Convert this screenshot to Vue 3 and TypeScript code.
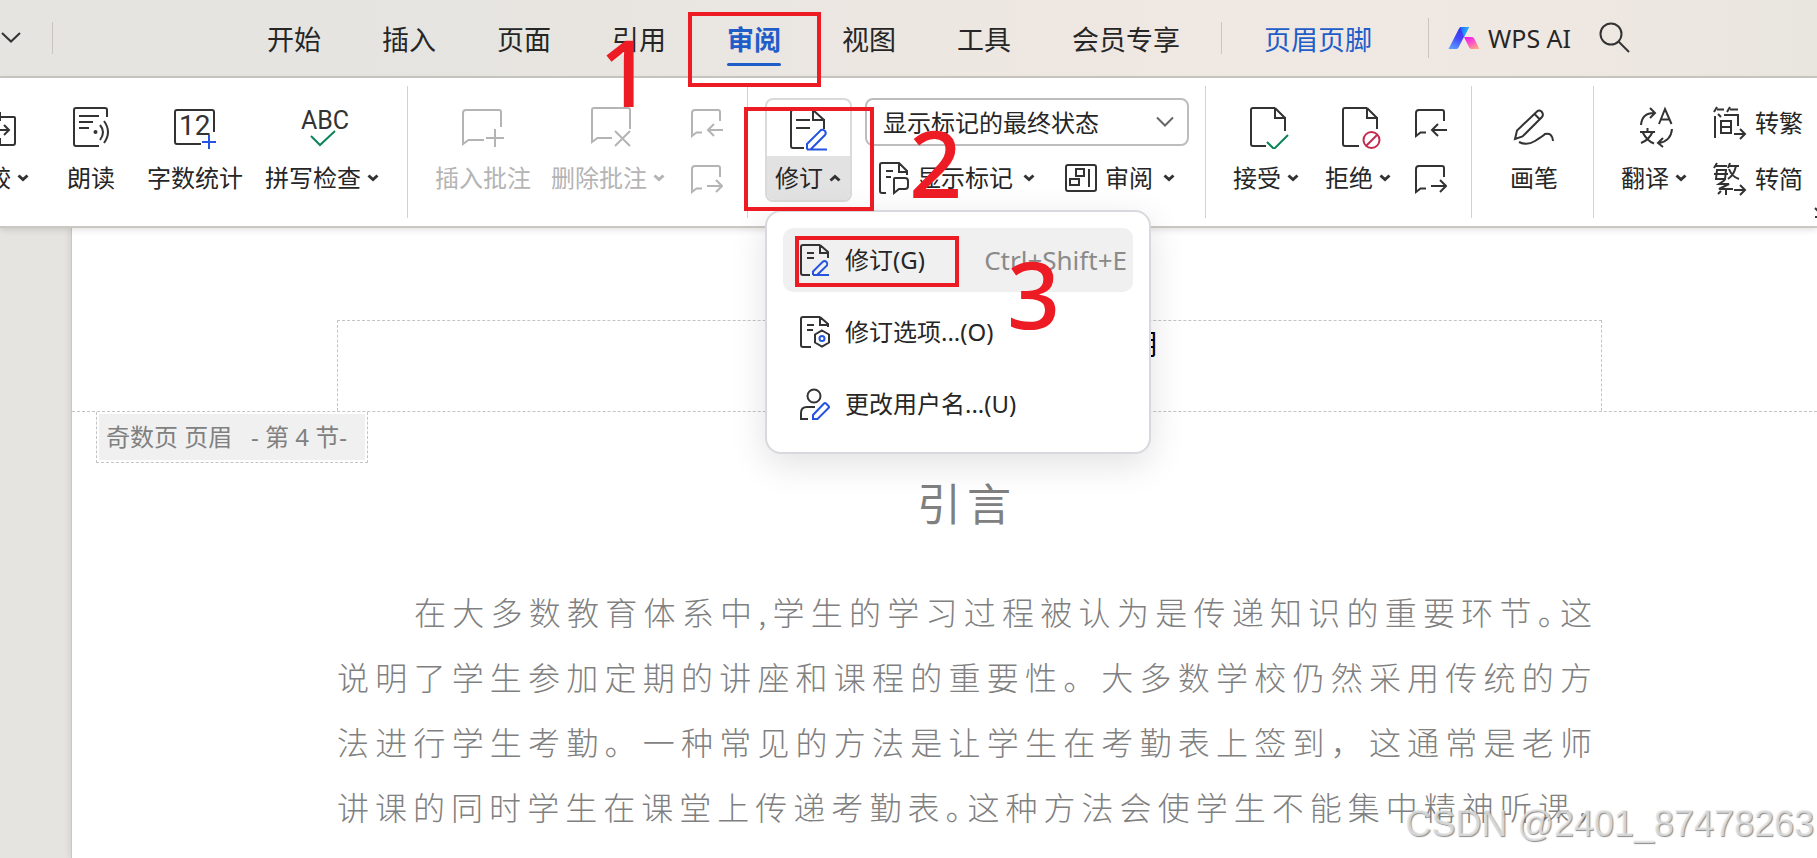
<script setup lang="ts">
import { ref } from 'vue'

interface MenuItem {
  icon: 'revise' | 'options' | 'user'
  label: string
  shortcut?: string
}

const tabs: string[] = ['开始', '插入', '页面', '引用', '审阅', '视图', '工具', '会员专享']
const activeTab = ref<string>('审阅')
const markupView = ref<string>('显示标记的最终状态')

const menuItems: MenuItem[] = [
  { icon: 'revise', label: '修订(G)', shortcut: 'Ctrl+Shift+E' },
  { icon: 'options', label: '修订选项...(O)' },
  { icon: 'user', label: '更改用户名...(U)' },
]
const hoveredItem = ref<number>(0)
</script>

<template>
  <div class="app">
    <header class="tabbar">
      <button class="icon-button" type="button" aria-label="展开">
        <svg width="20" height="12" viewBox="0 0 20 12"><path d="M1 1l9 8.500 9-8.500" /></svg>
      </button>
      <i class="bar-line first"></i>
      <nav class="tabs">
        <button
          v-for="tab in tabs"
          :key="tab"
          type="button"
          class="tab"
          :class="{ active: tab === activeTab }"
          @click="activeTab = tab"
        >{{ tab }}</button>
      </nav>
      <i class="bar-line"></i>
      <button type="button" class="tab context">页眉页脚</button>
      <i class="bar-line tall"></i>
      <button type="button" class="ai">
        <svg width="32" height="22" viewBox="0 0 32 22">
          <defs>
            <linearGradient id="aiBlue" x1="0.700" y1="0" x2="0.200" y2="1">
              <stop offset="0" stop-color="#3a2cf5" /><stop offset="0.500" stop-color="#4448f8" /><stop offset="1" stop-color="#5a9cff" />
            </linearGradient>
            <linearGradient id="aiCyan" x1="0" y1="0" x2="1" y2="0.300">
              <stop offset="0" stop-color="#2458f5" /><stop offset="1" stop-color="#22c4fb" />
            </linearGradient>
            <linearGradient id="aiPink" x1="0.200" y1="0" x2="0.900" y2="1">
              <stop offset="0" stop-color="#f21af0" /><stop offset="0.500" stop-color="#fb5cc0" /><stop offset="1" stop-color="#ffb47c" />
            </linearGradient>
          </defs>
          <path d="M11 1.500Q11.800 0 13 0H21L10.500 20.500Q9.800 22 8 22H0.500z" fill="url(#aiBlue)" />
          <path d="M12 0H21L16 10z" fill="url(#aiCyan)" />
          <path d="M16 10H24Q25.500 10 26.200 11.500L31.500 22H24Q22 22 21.200 20.500z" fill="url(#aiPink)" />
        </svg>
        WPS AI
      </button>
      <button class="icon-button search" type="button" aria-label="搜索">
        <svg width="32" height="32" viewBox="0 0 32 32"><circle cx="12" cy="12" r="10.500" /><path d="M19.500 19.500L30 30" /></svg>
      </button>
    </header>

    <section class="ribbon">
      <div class="group proof">
        <button type="button" class="tool">
          <svg width="66" height="44" viewBox="0 0 66 44">
            <path d="M28 12H43Q44 12 44 13V38Q44 40 42 40H28M22 8H29V16M22 25H38M33 20l5 5-5 5M29 33v8" transform="translate(5 0)" />
          </svg>
          <span class="caption">比较<svg class="caret" width="12" height="8" viewBox="0 0 12 8"><path d="M1.500 1.500L6 5.500l4.500-4" /></svg></span>
        </button>
        <button type="button" class="tool roomy">
          <svg width="38" height="44" viewBox="0 0 38 44">
            <path d="M35 12V5Q35 3 33 3H4Q2 3 2 5V39Q2 41 4 41H27M7 11H27M7 17H21M7 23H17M28 20Q34 27 28 35M32 16Q40 27 32 38" />
            <circle class="ink-fill" cx="23.500" cy="27" r="2" />
          </svg>
          <span class="caption">朗读</span>
        </button>
        <button type="button" class="tool">
          <svg width="44" height="44" viewBox="0 0 44 44">
            <path d="M41 27V7Q41 5 39 5H4Q2 5 2 7V37Q2 39 4 39H28" />
            <text x="6" y="30" class="digits">12</text>
            <path class="blue" d="M36 30V44M29 37H43" />
          </svg>
          <span class="caption">字数统计</span>
        </button>
        <button type="button" class="tool">
          <svg width="60" height="44" viewBox="0 0 60 44">
            <text x="30" y="24" text-anchor="middle" class="abc">ABC</text>
            <path class="green" d="M16 31l9 9L40 26" />
          </svg>
          <span class="caption">拼写检查<svg class="caret" width="12" height="8" viewBox="0 0 12 8"><path d="M1.500 1.500L6 5.500l4.500-4" /></svg></span>
        </button>
      </div>

      <div class="group comments">
        <button type="button" class="tool" disabled>
          <svg width="42" height="44" viewBox="0 0 42 44">
            <path d="M39 22V7Q39 5 37 5H4Q1 5 1 8V39L6.500 35H22M33 24V42M24 33H42" />
          </svg>
          <span class="caption">插入批注</span>
        </button>
        <button type="button" class="tool" disabled>
          <svg width="42" height="44" viewBox="0 0 42 44">
            <path d="M40 24V5Q40 3 38 3H4Q2 3 2 5V37L7.500 33H22M25 26L40 41M40 26L25 41" />
          </svg>
          <span class="caption">删除批注<svg class="caret" width="12" height="8" viewBox="0 0 12 8"><path d="M1.500 1.500L6 5.500l4.500-4" /></svg></span>
        </button>
        <div class="stack">
          <button type="button" class="mini" aria-label="上一条批注" disabled>
            <svg width="32" height="30" viewBox="0 0 32 30"><path d="M29 13V4Q29 2 27 2H4Q1 2 1 5V28L5.500 24.500H11M32 22H17M23 16l-6 6 6 6" /></svg>
          </button>
          <button type="button" class="mini" aria-label="下一条批注" disabled>
            <svg width="32" height="30" viewBox="0 0 32 30"><path d="M29 13V4Q29 2 27 2H4Q1 2 1 5V28L5.500 24.500H11M16 22H31M25 16l6 6-6 6" /></svg>
          </button>
        </div>
      </div>

      <div class="group track">
        <div class="split">
          <button type="button" class="split-top" aria-label="修订">
            <svg width="40" height="44" viewBox="0 0 40 44">
              <path d="M24 3H4Q2 3 2 5V39Q2 41 4 41H15M24 3L35 13V22M24 3V13H36M7 13H21M7 21H21" />
              <path class="blue" d="M18 42.500L18 37 32 23Q34 22 36 24 37.500 26 36 28L22 42M18 42.500H38" />
            </svg>
          </button>
          <button type="button" class="split-bottom" aria-haspopup="menu" aria-expanded="true">
            修订<svg class="caret" width="12" height="8" viewBox="0 0 12 8"><path d="M1.500 6.500L6 2.500l4.500 4" /></svg>
          </button>
          <ul class="menu" role="menu">
            <li v-for="(item, index) in menuItems" :key="item.label" role="none">
              <button
                type="button"
                role="menuitem"
                class="menu-item"
                :class="{ hovered: index === hoveredItem }"
                @mouseenter="hoveredItem = index"
              >
                <svg v-if="item.icon === 'revise'" width="30" height="34" viewBox="0 0 30 34">
                  <path d="M20 2H3Q1 2 1 4V30Q1 32 3 32H10M20 2L28 9V15M20 2V10H29M7 10H14M7 15H14" />
                  <path class="blue" d="M13 32V28.500L23 18.500Q25 17.500 26.500 19 28 20.500 27 22.500L17 32M13 32H29" />
                </svg>
                <svg v-else-if="item.icon === 'options'" width="30" height="34" viewBox="0 0 30 34">
                  <path d="M20 2H3Q1 2 1 4V30Q1 32 3 32H11M20 2L28 9V12M20 2V10H29M7 10H14M7 15H13M22 15.500L29 19.500V27.500L22 31.500 15 27.500V19.500z" />
                  <circle class="blue" cx="22" cy="23.500" r="2.500" />
                </svg>
                <svg v-else width="30" height="34" viewBox="0 0 30 34">
                  <path d="M8 32H1V26Q1 20 7 20H15" /><circle cx="14" cy="9" r="6.500" />
                  <path class="blue" d="M13 32V28L24 16.500Q25 15.500 26 16.500L28.500 19Q29.500 20 28.500 21L17.500 32z" />
                </svg>
                <span>{{ item.label }}</span>
                <kbd v-if="item.shortcut">{{ item.shortcut }}</kbd>
              </button>
            </li>
          </ul>
        </div>
        <div class="stack views">
          <div class="select-box">
            <select v-model="markupView" aria-label="标记显示方式">
              <option>显示标记的最终状态</option>
            </select>
            <svg width="18" height="12" viewBox="0 0 18 12"><path d="M1 1.500l8 8 8-8" /></svg>
          </div>
          <div class="row">
            <button type="button" class="inline-tool">
              <svg width="30" height="34" viewBox="0 0 30 34">
                <path d="M7 32H3Q1 32 1 30V4Q1 2 3 2H20L28 10V14M20 2V11H28M7 10H14M7 16H12M16 17H26Q29 17 29 20V25Q29 28 26 28H20L15 32V18Q15 17 16 17z" />
              </svg>
              显示标记<svg class="caret" width="12" height="8" viewBox="0 0 12 8"><path d="M1.500 1.500L6 5.500l4.500-4" /></svg>
            </button>
            <button type="button" class="inline-tool">
              <svg width="32" height="34" viewBox="0 0 32 34">
                <path d="M3 4H29Q31 4 31 6V28Q31 30 29 30H3Q1 30 1 28V6Q1 4 3 4zM24 8V26M11 8H19V15H11zM5 18H14V24H5z" />
              </svg>
              审阅<svg class="caret" width="12" height="8" viewBox="0 0 12 8"><path d="M1.500 1.500L6 5.500l4.500-4" /></svg>
            </button>
          </div>
        </div>
      </div>

      <div class="group changes">
        <button type="button" class="tool">
          <svg width="40" height="44" viewBox="0 0 40 44">
            <path d="M26 3H4Q2 3 2 5V39Q2 41 4 41H17M26 3L36 13V26M26 3V13H37" />
            <path class="green" d="M18 37l7 7L39 30" />
          </svg>
          <span class="caption">接受<svg class="caret" width="12" height="8" viewBox="0 0 12 8"><path d="M1.500 1.500L6 5.500l4.500-4" /></svg></span>
        </button>
        <button type="button" class="tool">
          <svg width="40" height="44" viewBox="0 0 40 44">
            <path d="M26 3H4Q2 3 2 5V39Q2 41 4 41H18M26 3L36 13V24M26 3V13H37" />
            <path class="red" d="M36.500 29.500L25 41" /><circle class="red" cx="30.500" cy="35" r="8" />
          </svg>
          <span class="caption">拒绝<svg class="caret" width="12" height="8" viewBox="0 0 12 8"><path d="M1.500 1.500L6 5.500l4.500-4" /></svg></span>
        </button>
        <div class="stack">
          <button type="button" class="mini" aria-label="上一条修订">
            <svg width="32" height="30" viewBox="0 0 32 30"><path d="M29 13V4Q29 2 27 2H4Q1 2 1 5V28L5.500 24.500H11M32 22H17M23 16l-6 6 6 6" /></svg>
          </button>
          <button type="button" class="mini" aria-label="下一条修订">
            <svg width="32" height="30" viewBox="0 0 32 30"><path d="M29 13V4Q29 2 27 2H4Q1 2 1 5V28L5.500 24.500H11M16 22H31M25 16l6 6-6 6" /></svg>
          </button>
        </div>
      </div>

      <div class="group pen">
        <button type="button" class="tool">
          <svg width="42" height="44" viewBox="0 0 42 44">
            <path d="M2 34L4 25.500 24 6.500Q26 4.500 28.500 6.500 31 9.500 29 12L9.500 31.500zM21.500 9L27 14.500M6 37Q14 41 22 36T32 29Q39 27 40 36" />
          </svg>
          <span class="caption">画笔</span>
        </button>
      </div>

      <div class="group language">
        <button type="button" class="tool">
          <svg width="36" height="44" viewBox="0 0 36 44">
            <path d="M2 20Q3 8 15 8M11 3l5 5-5 5M33 24Q32 36 20 38M24 33l-5 5 5 4" />
            <path d="M20 19L26 4l6.500 15M22 14.500H30.500M1 27H16M8.500 23V27M13.500 27Q10 35 2 38M3.500 27Q8 36 15 38.500" />
          </svg>
          <span class="caption">翻译<svg class="caret" width="12" height="8" viewBox="0 0 12 8"><path d="M1.500 1.500L6 5.500l4.500-4" /></svg></span>
        </button>
        <div class="stack">
          <button type="button" class="inline-tool">
            <svg width="34" height="34" viewBox="0 0 34 34">
              <path d="M4 1L1 6M4 3.500H11M17 1L14 6M17 3.500H25M2 10V32M5 8L8 11M11 9H25V20M8 15H18V27H8zM8 21H18M21 28H32M27 23l5 5-5 5" />
            </svg>
            转繁
          </button>
          <button type="button" class="inline-tool">
            <svg width="34" height="34" viewBox="0 0 34 34">
              <path d="M4 1L1 6M3 4H14M4 8H13L12 17H3zM1 12H15M17 1L15 6M16 4H26M23 4Q21 13 15 17M16 7Q19 15 26 17M12 18L6 22H16L6 27H20M13 27V33M8 29L5 32M21 28H32M27 23l5 5-5 5" />
            </svg>
            转简
          </button>
        </div>
      </div>
      <button type="button" class="launcher" aria-label="更多选项">
        <svg width="12" height="12" viewBox="0 0 12 12"><path d="M1 1l4 4M1 10H10V2" /></svg>
      </button>
    </section>

    <main class="workspace">
      <article class="sheet">
        <div class="header-zone">
          <div class="header-box"><span>明</span></div>
        </div>
        <div class="header-tag"><span>奇数页 页眉&nbsp;&nbsp; - 第 4 节-</span></div>
        <h1>引言</h1>
        <div class="text">
          <p class="indent">在大多数教育体系中,学生的学习过程被认为是传递知识的重要环节<span class="half">。</span>这</p>
          <p>说明了学生参加定期的讲座和课程的重要性。大多数学校仍然采用传统的方</p>
          <p>法进行学生考勤。一种常见的方法是让学生在考勤表上签到，这通常是老师</p>
          <p>讲课的同时学生在课堂上传递考勤表<span class="half">。</span>这种方法会使学生不能集中精神听课<span class="half">，</span></p>
        </div>
      </article>
    </main>

    <div class="mark box-one"></div>
    <div class="mark box-two"></div>
    <div class="mark box-three"></div>
    <span class="step step-one">1</span>
    <span class="step step-two">2</span>
    <span class="step step-three">3</span>
    <span class="watermark">CSDN @2401_87478263</span>
  </div>
</template>

<style>
body {
  margin: 0;
}
</style>

<style scoped>
* {
  box-sizing: border-box;
}

.app {
  position: relative;
  display: flex;
  flex-direction: column;
  height: 100vh;
  overflow: hidden;
  background: #e5e4e0;
  color: #262626;
  font-family: "Noto Sans", "Noto Sans CJK SC", sans-serif;
  font-size: 24px;
  line-height: 32px;
}

button {
  margin: 0;
  padding: 0;
  border: 0;
  background: none;
  color: inherit;
  font: inherit;
  white-space: nowrap;
}

svg {
  display: block;
  flex: none;
  fill: none;
  stroke: #333;
  stroke-width: 2;
}

svg text {
  stroke: none;
  fill: #333;
}

.digits {
  font: 28px "Roboto", sans-serif;
}

.abc {
  font: 25px "Roboto", sans-serif;
}

svg .blue {
  stroke: #2454e0;
}

svg .green {
  stroke: #0b8457;
}

svg .red {
  stroke: #c62a50;
}

svg .ink-fill {
  fill: #333;
  stroke: none;
}

svg [fill^="url"] {
  stroke: none;
}

/* Tab bar */
.tabbar {
  display: flex;
  align-items: center;
  flex: none;
  height: 78px;
  padding-left: 1px;
  border-bottom: 2px solid #cbc7c2;
  background: linear-gradient(90deg, #e5e4e0 20%, #f0e8e2 66%, #efe8e2 86%, #e9e6df);
}

.bar-line {
  flex: none;
  width: 1px;
  height: 32px;
  background: #c9c6c2;
}

.bar-line.first {
  margin: 0 214px 0 31px;
}

.bar-line.tall {
  height: 40px;
}

.tabs {
  display: flex;
  gap: 61px;
  margin-right: 41px;
}

.tab {
  position: relative;
  height: 76px;
  padding-top: 4px;
  font-size: 27px;
}

.tab.active {
  color: #1f5dc9;
  font-weight: 700;
}

.tab.active::after {
  content: "";
  position: absolute;
  right: 0;
  bottom: 10px;
  left: 0;
  height: 3px;
  border-radius: 2px;
  background: #1f5dc9;
}

.tab.context {
  margin: 0 56px 0 42px;
  color: #1f5dc9;
}

.ai {
  display: flex;
  align-items: center;
  gap: 8px;
  margin-left: 19px;
  font-size: 25px;
}

.search {
  margin-left: 28px;
}

/* Ribbon */
.ribbon {
  position: relative;
  z-index: 1;
  display: flex;
  flex: none;
  height: 150px;
  padding: 8px 0;
  border-bottom: 2px solid #cbc7c2;
  background: #fff;
  box-shadow: 0 2px 6px rgba(0, 0, 0, 0.12);
}

.group {
  display: flex;
  flex: none;
  gap: 20px;
  padding-top: 19px;
  border-right: 1px solid #d2d2d2;
}

.group:last-of-type {
  border-right: 0;
}

.proof {
  justify-content: flex-end;
  gap: 22px;
  width: 408px;
  padding-right: 22px;
}

.comments {
  padding-right: 24px;
  padding-left: 27px;
}

.track {
  gap: 13px;
  padding-right: 16px;
  padding-left: 17px;
}

.changes {
  padding-right: 24px;
  padding-left: 27px;
}

.pen {
  padding-right: 35px;
  padding-left: 38px;
}

.language {
  padding-left: 27px;
}

.tool {
  display: flex;
  flex-direction: column;
  align-items: center;
  gap: 13px;
  height: 89px;
}

.tool.roomy {
  padding: 0 10px;
}

.caption {
  display: flex;
  align-items: center;
}

.caret {
  margin: 0 6px;
  stroke-width: 3;
}

.tool:disabled {
  color: #b4b4b4;
}

button:disabled svg {
  stroke: #b4b4b4;
}

.stack {
  display: flex;
  flex-direction: column;
  gap: 24px;
  padding-top: 2px;
}

.stack .mini {
  height: 32px;
}

.changes .stack {
  margin-left: -2px;
}

.split {
  position: relative;
  width: 87px;
  height: 104px;
  margin-top: -7px;
  border: 2px solid #dadada;
  border-radius: 8px;
}

.split-top {
  display: flex;
  justify-content: center;
  width: 100%;
  height: 56px;
  padding-top: 7px;
}

.split-bottom {
  display: flex;
  align-items: center;
  width: 100%;
  height: 44px;
  padding-left: 8px;
  border-radius: 0 0 6px 6px;
  background: #e2e2e2;
}

.stack.views {
  gap: 16px;
  margin-top: -7px;
  padding-top: 0;
}

.select-box {
  position: relative;
}

.select-box select {
  display: block;
  width: 324px;
  height: 48px;
  padding: 2px 48px 0 16px;
  border: 2px solid #bdbdbd;
  border-radius: 8px;
  appearance: none;
  background: #fff;
  color: inherit;
  font: inherit;
}

.select-box svg {
  position: absolute;
  top: 18px;
  right: 15px;
  stroke: #666;
  pointer-events: none;
}

.row {
  display: flex;
  gap: 30px;
  padding-left: 14px;
}

.inline-tool {
  display: flex;
  align-items: center;
  gap: 8px;
  height: 32px;
}

.inline-tool .caret {
  margin: 0 0 0 2px;
}

.launcher {
  position: absolute;
  top: 129px;
  right: -9px;
}

/* Drop-down menu */
.menu {
  position: absolute;
  top: 110px;
  left: -2px;
  display: flex;
  flex-direction: column;
  gap: 8px;
  width: 386px;
  height: 244px;
  margin: 0;
  padding: 16px;
  border: 2px solid #d8d8de;
  border-radius: 16px;
  background: #fff;
  box-shadow: 0 10px 36px rgba(0, 0, 0, 0.12);
  list-style: none;
}

.menu-item {
  display: flex;
  align-items: center;
  width: 100%;
  height: 64px;
  padding: 0 6px 0 17px;
  border-radius: 10px;
}

.menu-item.hovered {
  background: #f0f0f0;
}

.menu-item span {
  margin-left: 15px;
}

kbd {
  margin-left: auto;
  color: #8a8a8a;
  font: inherit;
  font-size: 26px;
}

/* Document */
.workspace {
  flex: 1;
  min-height: 0;
  padding-left: 71px;
}

.sheet {
  height: 100%;
  border-left: 1px solid #c8c7c4;
  background: #fff;
  box-shadow: -2px 0 6px rgba(0, 0, 0, 0.08);
}

.header-zone {
  height: 184px;
  padding: 92px 215px 0 265px;
  border-bottom: 1px dashed #c4c4c4;
}

.header-box {
  height: 91px;
  padding: 7px 0 0 791px;
  border: 1px dashed #c4c4c4;
  border-bottom: 0;
  color: #000;
  font-size: 28px;
}

.header-tag {
  width: 272px;
  height: 51px;
  margin-left: 24px;
  padding: 2px;
  border: 1px dashed #c4c4c4;
  border-top: 0;
  color: #808080;
}

.header-tag span {
  display: block;
  height: 46px;
  padding: 7px 0 0 7px;
  background: #f0f0f0;
}

h1 {
  margin: 9px 220px 0 265px;
  color: #808080;
  font-size: 44px;
  font-weight: 400;
  line-height: 64px;
  letter-spacing: 6px;
  text-align: center;
}

.text {
  margin: 43px 225px 0 265px;
  color: #808080;
  font-family: "Noto Sans CJK SC", sans-serif;
  font-size: 32px;
  font-weight: 300;
  line-height: 65px;
}

.text p {
  margin: 0;
  text-align: justify;
  text-align-last: justify;
  white-space: nowrap;
}

.text .indent {
  padding-left: 77px;
}

.half {
  font-feature-settings: "halt";
}

/* Annotations above the window */
.mark {
  position: absolute;
  z-index: 3;
  border: 4px solid #ed1c24;
  pointer-events: none;
}

.box-one {
  top: 12px;
  left: 688px;
  width: 133px;
  height: 75px;
}

.box-two {
  top: 107px;
  left: 744px;
  width: 130px;
  height: 104px;
}

.box-three {
  top: 236px;
  left: 795px;
  width: 164px;
  height: 51px;
}

.step {
  position: absolute;
  z-index: 3;
  color: #ed1c24;
  font-size: 93px;
  font-weight: 500;
  line-height: 96px;
  pointer-events: none;
}

.step-one {
  top: 23px;
  left: 599px;
}

.step-two {
  top: 114px;
  left: 909px;
}

.step-three {
  top: 245px;
  left: 1007px;
}

.watermark {
  position: absolute;
  right: 3px;
  bottom: 14px;
  z-index: 3;
  color: rgba(232, 232, 232, 0.8);
  font-family: "Liberation Sans", sans-serif;
  font-size: 36px;
  line-height: 40px;
  text-shadow: 1px 1px 1px rgba(90, 90, 90, 0.7);
}
</style>
